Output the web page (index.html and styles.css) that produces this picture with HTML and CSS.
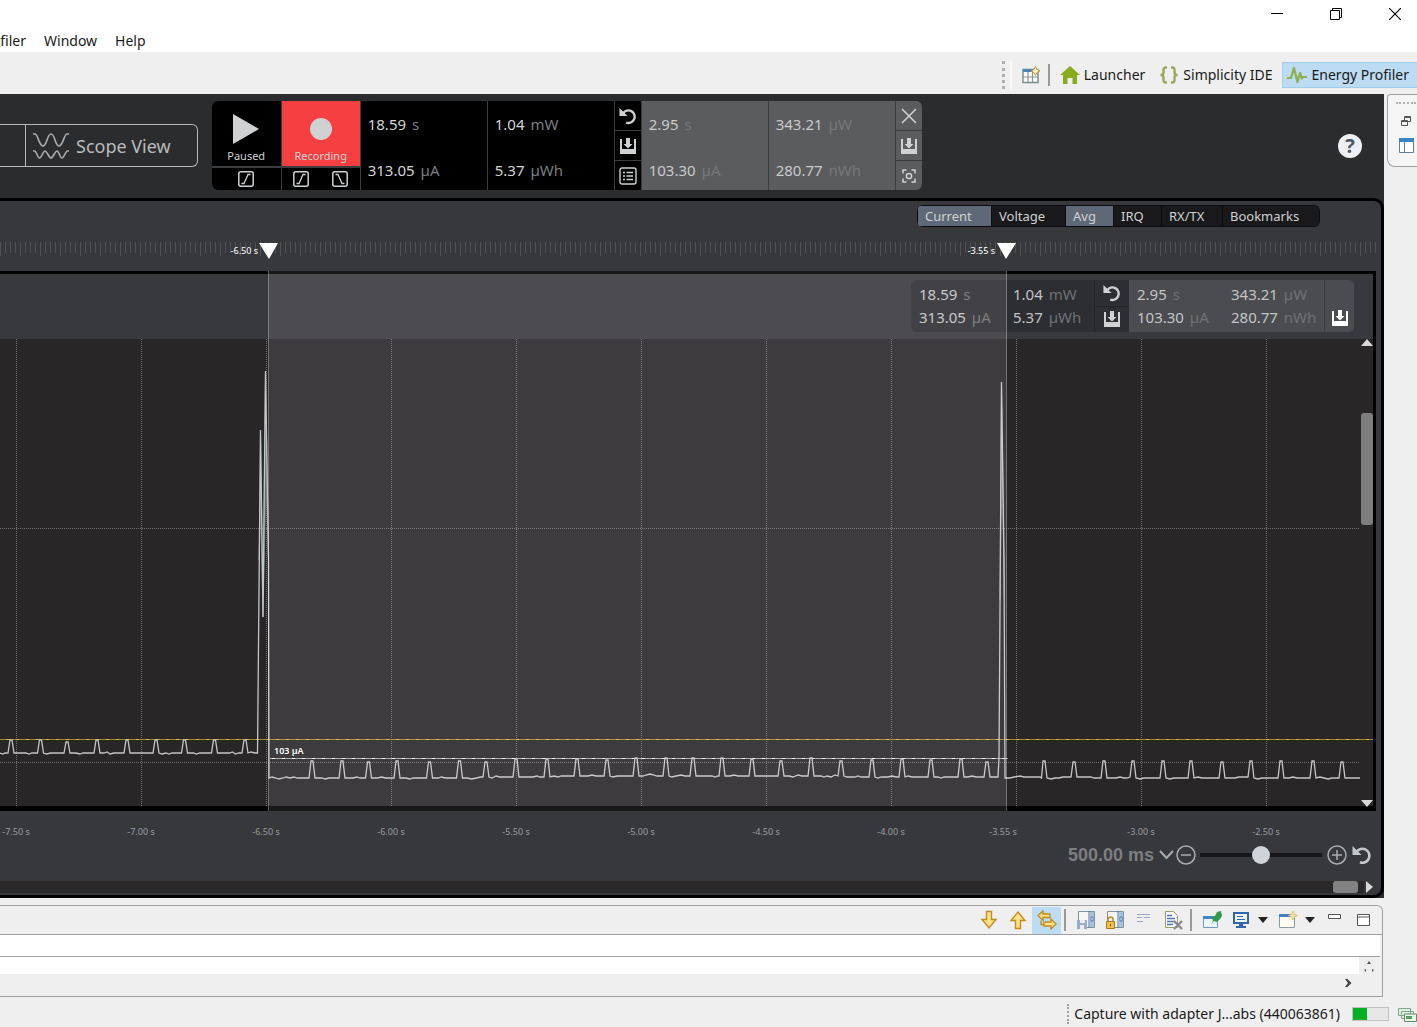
FILE: index.html
```html
<!DOCTYPE html>
<html lang="en">
<head>
<meta charset="utf-8">
<meta name="viewport" content="width=device-width, initial-scale=1">
<title>Energy Profiler</title>
<link rel="stylesheet" href="styles.css">
</head>
<body>
<svg class="defs" aria-hidden="true">
  <symbol id="undo" viewBox="0 0 20 20"><path d="M.5 1v9h9z" fill="currentColor"/><path d="M4.500 7A7 7 0 1 1 8 17.300" fill="none" stroke="currentColor" stroke-width="2.600"/></symbol>
  <symbol id="save" viewBox="0 0 18 18"><path d="M1 2h2v10h12V2h2v15H1z" fill="currentColor"/><path d="M7 1h4v6h2.500L9 11.500 4.500 7H7z" fill="currentColor"/></symbol>
  <symbol id="rise" viewBox="0 0 16 16"><rect x=".8" y=".8" width="14.400" height="14.400" rx="2" fill="none" stroke="currentColor" stroke-width="1.500"/><path d="M3.500 12.500H6L10 3.500h2.500" fill="none" stroke="currentColor" stroke-width="1.300"/></symbol>
  <symbol id="fall" viewBox="0 0 16 16"><rect x=".8" y=".8" width="14.400" height="14.400" rx="2" fill="none" stroke="currentColor" stroke-width="1.500"/><path d="M3.500 3.500H6l4 9h2.500" fill="none" stroke="currentColor" stroke-width="1.300"/></symbol>
</svg>

<header class="titlebar">
  <button class="win-btn" aria-label="Minimize"><svg width="12" height="12"><path d="M0 5.500h12" stroke="#000"/></svg></button>
  <button class="win-btn" aria-label="Restore"><svg width="12" height="12" fill="none" stroke="#000"><path d="M.5 2.500h9v9h-9zM2.500 2.500v-2h9v9h-2"/></svg></button>
  <button class="win-btn" aria-label="Close"><svg width="12" height="12"><path d="M0 0l12 12M12 0L0 12" stroke="#000" stroke-width="1.200"/></svg></button>
</header>
<nav class="menubar">
  <button class="menu">filer</button>
  <button class="menu">Window</button>
  <button class="menu">Help</button>
</nav>

<div class="perspectives">
  <span class="grip"></span>
  <button class="persp icon-only" aria-label="Open perspective"><svg width="18" height="18" viewBox="0 0 18 18"><path d="M1 3.500h15v13H1z" fill="#fff" stroke="#7a8a8a" stroke-width="1.400"/><path d="M1 3h10v3H1z" fill="#4c86b8"/><path d="M6 6v10M1 11h15M10.500 6v10" stroke="#8a9490" stroke-width="1.200"/><path d="M13.500.5l1.500 3 3 1.500-3 1.500-1.500 3-1.500-3-3-1.500 3-1.500z" fill="#fff3c8" stroke="#c9963a"/></svg></button>
  <span class="vsep"></span>
  <button class="persp"><svg width="20" height="18" viewBox="0 0 20 18"><path d="M10 0l10 9h-3v9h-4.500v-6h-5v6H3V9H0z" fill="#8aaa1e"/></svg>Launcher</button>
  <button class="persp"><svg width="20" height="18" viewBox="0 0 20 18" fill="none" stroke="#9aa85a" stroke-width="2.400"><path d="M8 1.500H6.500Q4.500 1.500 4.500 4v2.500Q4.500 9 1.500 9q3 0 3 2.500V14q0 2.500 2 2.500H8M12 1.500h1.500q2 0 2 2.500v2.500q0 2.500 3 2.500-3 0-3 2.500V14q0 2.500-2 2.500H12"/></svg>Simplicity IDE</button>
  <button class="persp active"><svg width="20" height="18" viewBox="0 0 20 18" fill="none" stroke="#8db04a" stroke-width="2.200" stroke-linejoin="round"><path d="M0 12h4l3-10 3.500 14L13 7l2 5.500 1-1.500h4"/></svg>Energy Profiler</button>
</div>

<div class="workbench">
  <main class="profiler">
    <section class="controls">
      <div class="views">
        <button class="view-prev" aria-label="Previous view"></button>
        <button class="view"><svg width="36" height="28" viewBox="0 0 36 28" fill="none" stroke="#a9abad" stroke-width="1.600"><path d="M0 2h2c3 0 4 12 8 12S14 2 18 2s4 12 8 12 5-12 8-12h2"/><path d="M0 19h1.500c2 0 3 7 5 7s3.500-7 5.500-7 4 7 6 7 4-7 6-7 3 7 5 7 3.500-7 5.500-7H36"/></svg>Scope View</button>
      </div>
      <div class="deck">
        <div class="transport">
          <button class="play"><svg width="26" height="30"><path d="M0 0l26 15L0 30z" fill="#d0d1d3"/></svg>Paused</button>
          <div class="triggers"><button aria-label="Rising edge"><svg width="16" height="16"><use href="#rise"/></svg></button></div>
        </div>
        <div class="transport rec-col">
          <button class="play rec"><svg width="22" height="30"><circle cx="11" cy="15" r="11" fill="#d0d1d3"/></svg>Recording</button>
          <div class="triggers"><button aria-label="Start on rising edge"><svg width="16" height="16"><use href="#rise"/></svg></button><button aria-label="Stop on falling edge"><svg width="16" height="16"><use href="#fall"/></svg></button></div>
        </div>
        <div class="stat"><p>18.59 <i>s</i></p><p>313.05 <i>µA</i></p></div>
        <div class="stat"><p>1.04 <i>mW</i></p><p>5.37 <i>µWh</i></p></div>
        <div class="tools">
          <button aria-label="Reset"><svg width="18" height="18"><use href="#undo"/></svg></button>
          <button aria-label="Save"><svg width="18" height="18"><use href="#save"/></svg></button>
          <button aria-label="List"><svg width="18" height="18" fill="none" stroke="currentColor"><rect x="1" y="1" width="16" height="16" rx="2" stroke-width="1.400"/><path d="M4 5.500h2M4 9h2M4 12.500h2M7.500 5.500H14M7.500 9H14M7.500 12.500H14" stroke-width="1.500"/></svg></button>
        </div>
        <div class="stat light"><p>2.95 <i>s</i></p><p>103.30 <i>µA</i></p></div>
        <div class="stat light"><p>343.21 <i>µW</i></p><p>280.77 <i>nWh</i></p></div>
        <div class="tools light">
          <button aria-label="Clear selection"><svg width="16" height="16"><path d="M1 1l14 14M15 1L1 15" stroke="currentColor" stroke-width="1.500"/></svg></button>
          <button aria-label="Save selection"><svg width="18" height="18"><use href="#save"/></svg></button>
          <button aria-label="Zoom to selection"><svg width="14" height="14" fill="none" stroke="currentColor" stroke-width="1.500"><path d="M1 4.500V1h3.500M9.500 1H13v3.500M13 9.500V13H9.500M4.500 13H1V9.500"/><circle cx="7" cy="7" r="2.600"/></svg></button>
        </div>
      </div>
      <button class="help" aria-label="Help">?</button>
    </section>

    <section class="scope">
      <div class="filters">
        <button class="on f-wide">Current</button><button class="f-wide">Voltage</button><button class="on f-small">Avg</button><button class="f-small">IRQ</button><button class="f-mid">RX/TX</button><button class="f-long">Bookmarks</button>
      </div>

      <div class="stage">
        <svg class="plot" viewBox="0 232 1381 610" preserveAspectRatio="xMaxYMin slice" role="img" aria-label="Current over time">
          <defs>
            <pattern id="ticks" width="20" height="14" y="242" patternUnits="userSpaceOnUse"><path d="M.5 0v14M5.500 0v11M10.500 0v11M15.500 0v11" stroke="#505154"/></pattern>
          </defs>
          <rect x="0" y="242" width="1377" height="14" fill="url(#ticks)"/>
          <g class="marker"><path d="M259 243h19l-9 16zM997 243h19l-10 16z"/><text x="258" y="254">-6.50 s</text><text x="995" y="254">-3.55 s</text></g>
          <rect x="0" y="271" width="1376" height="540" fill="#000"/>
          <rect x="0" y="274" width="1373" height="65" fill="#38393d"/>
          <rect x="0" y="339" width="1373" height="467" fill="#282627"/>
          <path class="grid" d="M16.500 339v467M141.500 339v467M266.500 339v467M391.500 339v467M516.500 339v467M641.500 339v467M766.500 339v467M891.500 339v467M1016.500 339v467M1141.500 339v467M1266.500 339v467M0 528.500h1360M0 762.500h1360"/>
          <path class="threshold" d="M0 739.500H1373"/><path class="threshold-dash" d="M6 739.500H1373"/>
          <path d="M270 758.500h738" stroke="#a5a5a5"/><path d="M272 758.500h736" stroke="#fff" stroke-dasharray="3 7"/>
          <path class="burst" d="M259 560L260.500 430 263 617 265.500 371 268.500 560 266 480 263 617 261 500zM1000 600L1001.500 383 1004.500 600 1002 450z"/>
          <path class="trace" d="M0 753l3 1 2-1H8l2-13h2l2 13h12l3 1 3-1H37.500l2-13h2l2 13 3 1 4-1H64l2-11h2l2 11h6l4 1 3-1H94l2-13h2l2 13h4l3-1 3 2 4-1H124l2-13h2l2 13H153l2-13h2l2 13 3 1 4-1 3 1 3-1H181.500l2-13h2l2 13h6l3 1 3-1H211.500l2-13h2l2 13h12l3-1 3 2 3-1H242l2-13h2l2 13 3-1 4 1H257.500L260.500 430 263 617 265.500 371 268.500 560 269 778l3-1 4 1 3 1 4-1 3-1 4 1 4-1 3 1H309l2-17h2l2 17h7l3 1 4-1H339l2-17h2l2 17h8l4-1 3 1H365.500l2-16h2l2 16h6l4-1 4 1H394l2-17h2l2 17h6l4 1 3-1H426.500l2-16h2l2 16h6l3-1 4 1H456.500l2-17h2l2 17h5l4 1 5-1 4-1H483l2-15h2l2 15 3 1 4-2 4 1H513l2-18h2l2 18h14l4-1 3 1H544l2-18h2l2 18 4-1 4 1 3-1H574l2-17h2l2 17h8l4-1 4 1H604l2-16h2l2 16 3 1 4-1H633l2-18h2l2 18h4l3-1 4-1 4 1 3 1H663l2-18h2l2 18 3 1 4-1 5-1 4 1H690l2-18h2l2 18H712l3 1 3-1H719l2-18h2l2 18h5l4-1 4 1H749l2-17h2l2 17H778l2-15h2l2 15h5l4 1 5-2 4 1H808l2-18h2l2 18h7l3 1 3-1 4 1 4-2 3 1H838l2-15h2l2 15 3 1H855l3-1 3 1H869l2-17h2l2 17 3 1 3-1h7l4-1 4 1H899l2-18h2l2 18 3-1 4 1H928l2-17h2l2 17h4l3 1 3-1H958l2-18h2l2 18h4l4-1 4 1H984l2-15h2l2 15H998l1-18 2.500-377L1004 560 1005 778h5l4-1 6-1 4 1H1040l1.500 1 1.500-17h2l2 17 4 1 4-1h4l4-1H1071l2-15h2l2 15h14l3 1H1101l2-17h2l2 17h9l4-1 4 1H1127l3-1 2-16h2l2 17 4 1 4-1H1160l2-17h2l2 17 4 1 4-1H1188l2-17h2l2 17 4-1 4 1H1219l2-16h2l2 16h10l4-1H1248l2-16h2l2 17 4 1 4-1H1278l2-17h2l2 17h5l4-1 4 1H1310l2-17h2l2 17 4-1 4 1 4 1 4-1H1339l2-16h2l2 16H1360"/>
          <text class="avg" x="274" y="754">103 µA</text>
          <g class="axis"><text x="16" y="835">-7.50 s</text><text x="141" y="835">-7.00 s</text><text x="266" y="835">-6.50 s</text><text x="391" y="835">-6.00 s</text><text x="516" y="835">-5.50 s</text><text x="641" y="835">-5.00 s</text><text x="766" y="835">-4.50 s</text><text x="891" y="835">-4.00 s</text><text x="1003" y="835">-3.55 s</text><text x="1141" y="835">-3.00 s</text><text x="1266" y="835">-2.50 s</text></g>
          <path d="M1361 346l6-7 6 7zM1361 800h12l-6 7z" fill="#d8d8d8"/>
          <rect x="1361" y="413" width="12" height="112" rx="3" fill="#7e7e7e"/>
        </svg>

        <div class="readout">
          <div class="mini"><p>18.59 <i>s</i></p><p>313.05 <i>µA</i></p></div>
          <div class="mini mid"><p>1.04 <i>mW</i></p><p>5.37 <i>µWh</i></p></div>
          <div class="mini-tools">
            <button aria-label="Reset"><svg width="18" height="18"><use href="#undo"/></svg></button>
            <button aria-label="Save"><svg width="18" height="18"><use href="#save"/></svg></button>
          </div>
          <div class="mini lit"><p>2.95 <i>s</i></p><p>103.30 <i>µA</i></p></div>
          <div class="mini lit last"><p>343.21 <i>µW</i></p><p>280.77 <i>nWh</i></p></div>
          <div class="mini-tools lit-tools"><button aria-label="Save selection"><svg width="18" height="18"><use href="#save"/></svg></button></div>
        </div>
        <div class="selection"></div>
      </div>

      <div class="zoombar">
        <select class="scale" aria-label="Time per division"><option>500.00 ms</option></select>
        <svg class="chev" width="15" height="10"><path d="M1 1l6.500 7L14 1" fill="none" stroke="#a9abad" stroke-width="2"/></svg>
        <button aria-label="Zoom out"><svg width="20" height="20" fill="none" stroke="#a9abad" stroke-width="1.500"><circle cx="10" cy="10" r="9"/><path d="M5 10h10"/></svg></button>
        <input class="slider" type="range" min="0" max="100" value="50" aria-label="Zoom">
        <button aria-label="Zoom in"><svg width="20" height="20" fill="none" stroke="#a9abad" stroke-width="1.500"><circle cx="10" cy="10" r="9"/><path d="M5 10h10M10 5v10"/></svg></button>
        <button class="reset" aria-label="Reset zoom"><svg width="20" height="20"><use href="#undo"/></svg></button>
      </div>
      <div class="hscroll"><span class="track"><span class="thumb"></span></span><svg width="7" height="12"><path d="M0 0l7 6-7 6z" fill="#d8d8d8"/></svg></div>
    </section>
  </main>

  <aside class="trim">
    <div class="trim-box">
      <span class="trim-grip"></span>
      <button aria-label="Restore view"><svg width="10" height="10" fill="none" stroke="#555"><path d="M.5 4.500h6v5h-6zM.5 5.500h6M3.500 4V.5h6v5H7M3.500 1.500h6"/></svg></button>
      <button aria-label="Layout"><svg width="15" height="15"><path d="M.5.5h14v14H.5z" fill="#fff" stroke="#5d7f96"/><path d="M0 0h15v4H0z" fill="#3a85c8"/><path d="M5.500 4v11" stroke="#5d7f96"/></svg></button>
    </div>
  </aside>
</div>

<section class="console">
  <div class="console-bar">
    <button aria-label="Next"><svg width="18" height="20" viewBox="0 0 18 20"><path d="M6.500 1.500h5v8h4.500L9 18 2 9.500h4.500z" fill="#fbe08a" stroke="#c28b1e" stroke-width="1.400"/></svg></button>
    <button aria-label="Previous"><svg width="18" height="20" viewBox="0 0 18 20"><path d="M6.500 18.500h5v-8h4.500L9 2 2 10.500h4.500z" fill="#fbe08a" stroke="#c28b1e" stroke-width="1.400"/></svg></button>
    <button class="pressed" aria-label="Synchronize"><svg width="20" height="20" viewBox="0 0 20 20" fill="#fbe08a" stroke="#c28b1e" stroke-width="1.300"><path d="M1 5.500L6 1v3h7v3.500H6v3z"/><path d="M19 14l-5-5v3H7v4h7v3z"/><path d="M4 10.500v4h3" fill="none"/></svg></button>
    <span class="vsep"></span>
    <button aria-label="Save log"><svg width="20" height="20"><path d="M2.500 1.500h16v16h-16z" fill="#f4f6f4" stroke="#7f93a0"/><path d="M13 1v17" stroke="#4b76b0"/><path d="M14 2h4v15h-4z" fill="#a9c1dc"/><path d="M15 7h2v4h-2z" fill="#fff" stroke="#4b76b0"/><path d="M1 10h10v9H1z" fill="#9badc6"/><path d="M4 10h5v3H4zM4 15h4v4H4z" fill="#e8edf2"/></svg></button>
    <button aria-label="Scroll lock"><svg width="20" height="20"><path d="M2.500 1.500h16v16h-16z" fill="#f4f6f4" stroke="#7f93a0"/><path d="M14 2h4v15h-4z" fill="#a9c1dc"/><path d="M13 1v17" stroke="#4b76b0"/><path d="M15 7h2v4h-2z" fill="#fff" stroke="#4b76b0"/><path d="M3 12V9.500q0-2.500 2.500-2.500T8 9.500V12" fill="none" stroke="#b98a20" stroke-width="1.500"/><path d="M1.500 11.500h8v7h-8z" fill="#f2c14a" stroke="#a97a18"/><path d="M5 14h1v2H5z" fill="#6a4a08"/></svg></button>
    <button aria-label="Word wrap"><svg width="20" height="20"><path d="M3 4.500h13M3 7.500h5M10 7.500h6M3 11.500h6" stroke="#98a6c2" stroke-width="1.200"/></svg></button>
    <button aria-label="Clear console"><svg width="20" height="20"><path d="M2.500 1.500h8l4 4v12h-12z" fill="#f8faff" stroke="#a09a70"/><path d="M4 5.500h5M4 8.500h8M4 11.500h8M4 14.500h6" stroke="#4c78b8" stroke-width="1.300"/><path d="M11 11l8 8M19 11l-8 8" stroke="#8a8a8a" stroke-width="2.400"/></svg></button>
    <span class="vsep"></span>
    <button aria-label="Pin console"><svg width="20" height="20"><path d="M1.500 6.500h14v11h-14z" fill="#eaf6fb" stroke="#6f9cc0"/><path d="M1 6h15v3H1z" fill="#4286c4"/><path d="M9 14l2-3-1-4 3-1 2-4 4-1 1 5-2 3-3 3-3-1z" fill="#2f9a4c"/></svg></button>
    <button aria-label="Display console"><svg width="20" height="20"><path d="M2 2h16v12H2z" fill="#2f66ae"/><path d="M4 4h12v8H4z" fill="#f2f6fb"/><path d="M6 6.500h6M6 9.500h8" stroke="#2f66ae"/><path d="M8 14h4v2h3v2H5v-2h3z" fill="#2f66ae"/></svg></button>
    <button class="drop" aria-label="Choose console"><svg width="10" height="6"><path d="M0 0h10L5 6z" fill="#222"/></svg></button>
    <button aria-label="Open console"><svg width="20" height="20"><path d="M1.500 4.500h15v13h-15z" fill="#fffdf0" stroke="#8a9aa0"/><path d="M1 4h13v3H1z" fill="#3f82c0"/><path d="M15 1l1.500 3 3 1.500-3 1.500L15 10l-1.500-3-3-1.500 3-1.500z" fill="#f9e3a0" stroke="#d8b560" stroke-width=".8"/></svg></button>
    <button class="drop" aria-label="Open console menu"><svg width="10" height="6"><path d="M0 0h10L5 6z" fill="#222"/></svg></button>
    <button class="min" aria-label="Minimize view"><svg width="13" height="16"><path d="M.5 2.500h12v4H.5z" fill="#fff" stroke="#555"/></svg></button>
    <button class="max" aria-label="Maximize view"><svg width="13" height="13"><path d="M.5.5h12v11H.5zM.5 3h12" fill="#fff" stroke="#555"/></svg></button>
  </div>
  <div class="console-title"></div>
  <div class="console-body"><div class="console-text"></div><svg width="20" height="16"><path d="M8 7l2-3 2 3zM5 13l2-1v3zM13 12l2 1-2 2z" fill="#555"/></svg></div>
  <div class="console-foot"><svg width="8" height="10"><path d="M1 1h2.500l4 4-4 4H1l3-4z" fill="#444"/></svg></div>
</section>

<footer class="status">
  <span class="status-grip"></span>
  <span class="task">Capture with adapter J...abs (440063861)</span>
  <span class="progress" role="progressbar" aria-label="Capture" aria-valuenow="40" aria-valuemin="0" aria-valuemax="100"><span class="bar" style="width:40%"></span></span>
  <button class="jobs" aria-label="Show background tasks"><svg width="19" height="15"><path d="M.5 1.500h12v7H.5zM3.500 4.500h12v7h-12z" fill="#dff0df" stroke="#7fa98a"/><path d="M6.500 7h12v7.500h-12z" fill="#eef8ee" stroke="#5c8c68"/><path d="M8 9h6v3H8z" fill="#4ca65a"/></svg></button>
</footer>
</body>
</html>
```
FILE: styles.css
```css
* { box-sizing: border-box; }
body {
  margin: 0;
  min-height: 100vh;
  display: flex;
  flex-direction: column;
  background: #efefef;
  color: #1a1a1a;
  font: 14px/20px "Noto Sans", "Open Sans", sans-serif;
  overflow-x: hidden;
}
button {
  margin: 0;
  padding: 0;
  border: 0;
  background: none;
  color: inherit;
  font: inherit;
  display: flex;
  align-items: center;
  justify-content: center;
}
svg { display: block; flex: none; }
p { margin: 0; }
i { font-style: normal; }
.defs { position: absolute; width: 0; height: 0; }

/* Window chrome */
.titlebar { display: flex; justify-content: flex-end; gap: 15px; height: 28px; background: #fff; }
.win-btn { width: 44px; height: 28px; }
.menubar { display: flex; gap: 18px; height: 24px; padding-top: 2px; background: #fff; }
.menu:first-child { width: 26px; justify-content: flex-end; }

/* Perspective switcher */
.perspectives { display: flex; align-items: center; justify-content: flex-end; height: 42px; padding-top: 4px; }
.grip { width: 10px; height: 28px; border-left: 3px dotted #b0b0b0; border-right: 2px solid #fafafa; margin-right: 10px; }
.vsep { width: 2px; height: 22px; background: #9a9a9a; }
.persp { gap: 4px; height: 26px; white-space: nowrap; margin-left: 14px; }
.icon-only { margin: 0 8px 0 0; }
.vsep + .persp { margin-left: 10px; }
.persp.active { margin-left: 10px; padding: 0 8px 0 4px; background: #bcdcf4; border: 1px solid #a3cdec; border-right: 0; }

/* Workbench */
.workbench { display: flex; gap: 3px; }
.profiler { flex: 1; min-width: 0; background: #2b2c2e; }
.trim { flex: none; width: 30px; }
.trim-box {
  display: flex;
  flex-direction: column;
  align-items: center;
  gap: 12px;
  height: 73px;
  padding: 7px 0 0 7px;
  border: 1px solid #a0a0a0;
  border-right: 0;
  border-radius: 4px 0 0 8px;
  background: #f5f5f5;
}
.trim-grip { width: 20px; border-top: 2px dotted #b0b0b0; }

/* Control deck */
.controls { display: flex; align-items: center; gap: 14px; height: 104px; padding: 7px 22px 8px 0; }
.views { display: flex; height: 43px; border: 1px solid #b8b9ba; border-left: 0; border-radius: 0 6px 6px 0; }
.view-prev { width: 25px; }
.view { gap: 7px; padding: 0 26px 0 7px; border-left: 1px solid #b8b9ba; color: #b9bbbd; font-size: 18px; white-space: nowrap; }
.deck { display: flex; gap: 1px; height: 89px; border-radius: 6px; overflow: hidden; background: #3b3c3e; }
.transport { display: flex; flex-direction: column; gap: 2px; width: 69px; color: #d0d1d3; }
.rec-col { width: 78px; }
.play { flex: 1; flex-direction: column; gap: 3px; padding-top: 12px; background: #000; font-size: 11px; line-height: 18px; }
.rec { background: #f53f40; }
.triggers { display: flex; justify-content: space-around; height: 22px; background: #000; }
.stat { display: flex; flex-direction: column; justify-content: space-between; width: 126px; padding: 13px 0 10px 7px; background: #000; color: #d3d4d6; font-size: 15px; white-space: nowrap; }
.stat i { color: #7b7d80; margin-left: 2px; }
.stat.light { background: #5b5c5e; color: #c9cacc; }
.stat.light i { color: #77787a; }
.tools { display: flex; flex-direction: column; gap: 1px; width: 26px; color: #d0d1d3; }
.tools button { flex: 1; background: #000; }
.tools.light button { background: #5b5c5e; }
.help { width: 24px; height: 24px; margin-left: auto; border-radius: 50%; background: #eef0f3; color: #4d5766; font-size: 20px; font-weight: 700; }

/* Scope */
.scope { border: 3px solid #000; border-left: 0; border-radius: 0 10px 10px 0; background: #37383c; overflow: hidden; }
.filters { display: flex; gap: 1px; width: max-content; margin: 4px 61px 5px auto; padding: 1px; border-radius: 6px; overflow: hidden; background: #0c0c0e; }
.filters button { justify-content: flex-start; height: 20px; padding-left: 7px; background: #19191b; color: #cfd1d3; font-size: 13px; }
.filters .on { background: #5e6876; }
.filters .f-wide { width: 73px; }
.filters .f-small { width: 47px; }
.filters .f-mid { width: 60px; }
.filters .f-long { width: 96px; }
.stage { position: relative; }
.plot { width: 100%; height: 610px; font-size: 9px; }
.marker { fill: #fff; text-anchor: end; }
.axis { fill: #9a9b9f; text-anchor: middle; }
.avg { fill: #fff; font-weight: 600; }
.grid { fill: none; stroke: #707072; stroke-dasharray: 1 1; }
.threshold { fill: none; stroke: #a08a20; stroke-width: 1; }
.threshold-dash { fill: none; stroke: #d8b850; stroke-dasharray: 3 7; }
.trace { fill: none; stroke: #c4c5c7; stroke-width: 1.300; }
.burst { fill: #8d98a0; stroke: #8d98a0; opacity: .6; }
.selection {
  position: absolute;
  top: 39px;
  right: 374px;
  width: 739px;
  height: 540px;
  border: solid rgba(255, 255, 255, .35);
  border-width: 0 1px;
  background: rgba(255, 250, 255, .1);
  background-clip: padding-box;
  pointer-events: none;
}
.readout { position: absolute; top: 48px; right: 27px; display: flex; height: 52px; border-radius: 5px; overflow: hidden; color: #c3c4c6; font-size: 15px; line-height: 23px; white-space: nowrap; }
.mini { width: 94px; padding: 3px 0 0 8px; background: #2d2e31; }
.mini.mid { width: 89px; }
.mini i { color: #6f7175; margin-left: 2px; }
.mini.lit { background: #4b4c50; }
.mini.lit.last { width: 101px; }
.mini-tools { display: flex; flex-direction: column; width: 35px; gap: 1px; border-left: 1px solid #242527; background: #242527; color: #d0d1d3; }
.mini-tools button { flex: 1; background: #2d2e31; }
.mini-tools.lit-tools { width: 30px; background: #4b4c50; color: #fff; border-color: #3c3d40; }
.lit-tools button { background: none; padding-top: 24px; }

/* Zoom row and time scroller */
.zoombar { display: flex; align-items: center; justify-content: flex-end; height: 26px; padding-right: 9px; }
.scale { appearance: none; padding: 0; border: 0; background: none; color: #7d7e81; font: bold 18px/24px "Liberation Sans", Arial, sans-serif; }
.chev { margin: 0 2px 0 4px; }
.slider { appearance: none; width: 122px; height: 20px; margin: 0 5px 0 4px; background: linear-gradient(#161618, #161618) center / 100% 4px no-repeat; }
.slider::-webkit-slider-thumb { appearance: none; width: 18px; height: 18px; border-radius: 50%; background: #d0d3d8; }
.reset { margin-left: 5px; color: #c3c6ca; }
.hscroll { display: flex; align-items: center; gap: 2px; height: 27px; padding: 12px 8px 2px 0; }
.track { flex: 1; display: flex; justify-content: flex-end; padding-right: 6px; height: 12px; background: #2b2829; }
.thumb { width: 25px; height: 12px; border-radius: 3px; background: #828282; }

/* Console */
.console { margin: 7px 34px 0 0; border: 1px solid #a0a0a0; border-left: 0; border-radius: 0 6px 0 0; }
.console-bar { display: flex; align-items: center; justify-content: flex-end; height: 29px; padding-right: 12px; border-bottom: 1px solid #a0a0a0; }
.console-bar button { width: 29px; height: 27px; }
.console-bar .pressed { background: #bcdcf4; }
.console-bar .vsep { margin: 0 5px 0 3px; }
.console-bar .drop { width: 16px; }
.console-bar .drop + button { margin-left: 2px; }
.console-bar .min { margin: 0 0 0 1px; }
.console-bar .max { width: 13px; margin-left: 8px; }
.console-title { height: 22px; margin-right: 2px; background: #fff; border-bottom: 1px solid #a0a0a0; }
.console-body { display: flex; padding-right: 3px; }
.console-text { flex: 1; height: 17px; background: #fff; }
.console-foot { display: flex; justify-content: flex-end; align-items: center; height: 22px; padding: 0 30px 4px 0; }

/* Status line */
.status { display: flex; align-items: center; justify-content: flex-end; height: 30px; padding-top: 4px; }
.status-grip { width: 7px; height: 20px; border-left: 2px dotted #a0a0a0; }
.task { white-space: nowrap; }
.progress { display: flex; width: 37px; height: 14px; margin: 0 9px 0 12px; border: 1px solid #c0c0c0; background: #e6e6e6; }
.bar { background: #06b025; }
```
